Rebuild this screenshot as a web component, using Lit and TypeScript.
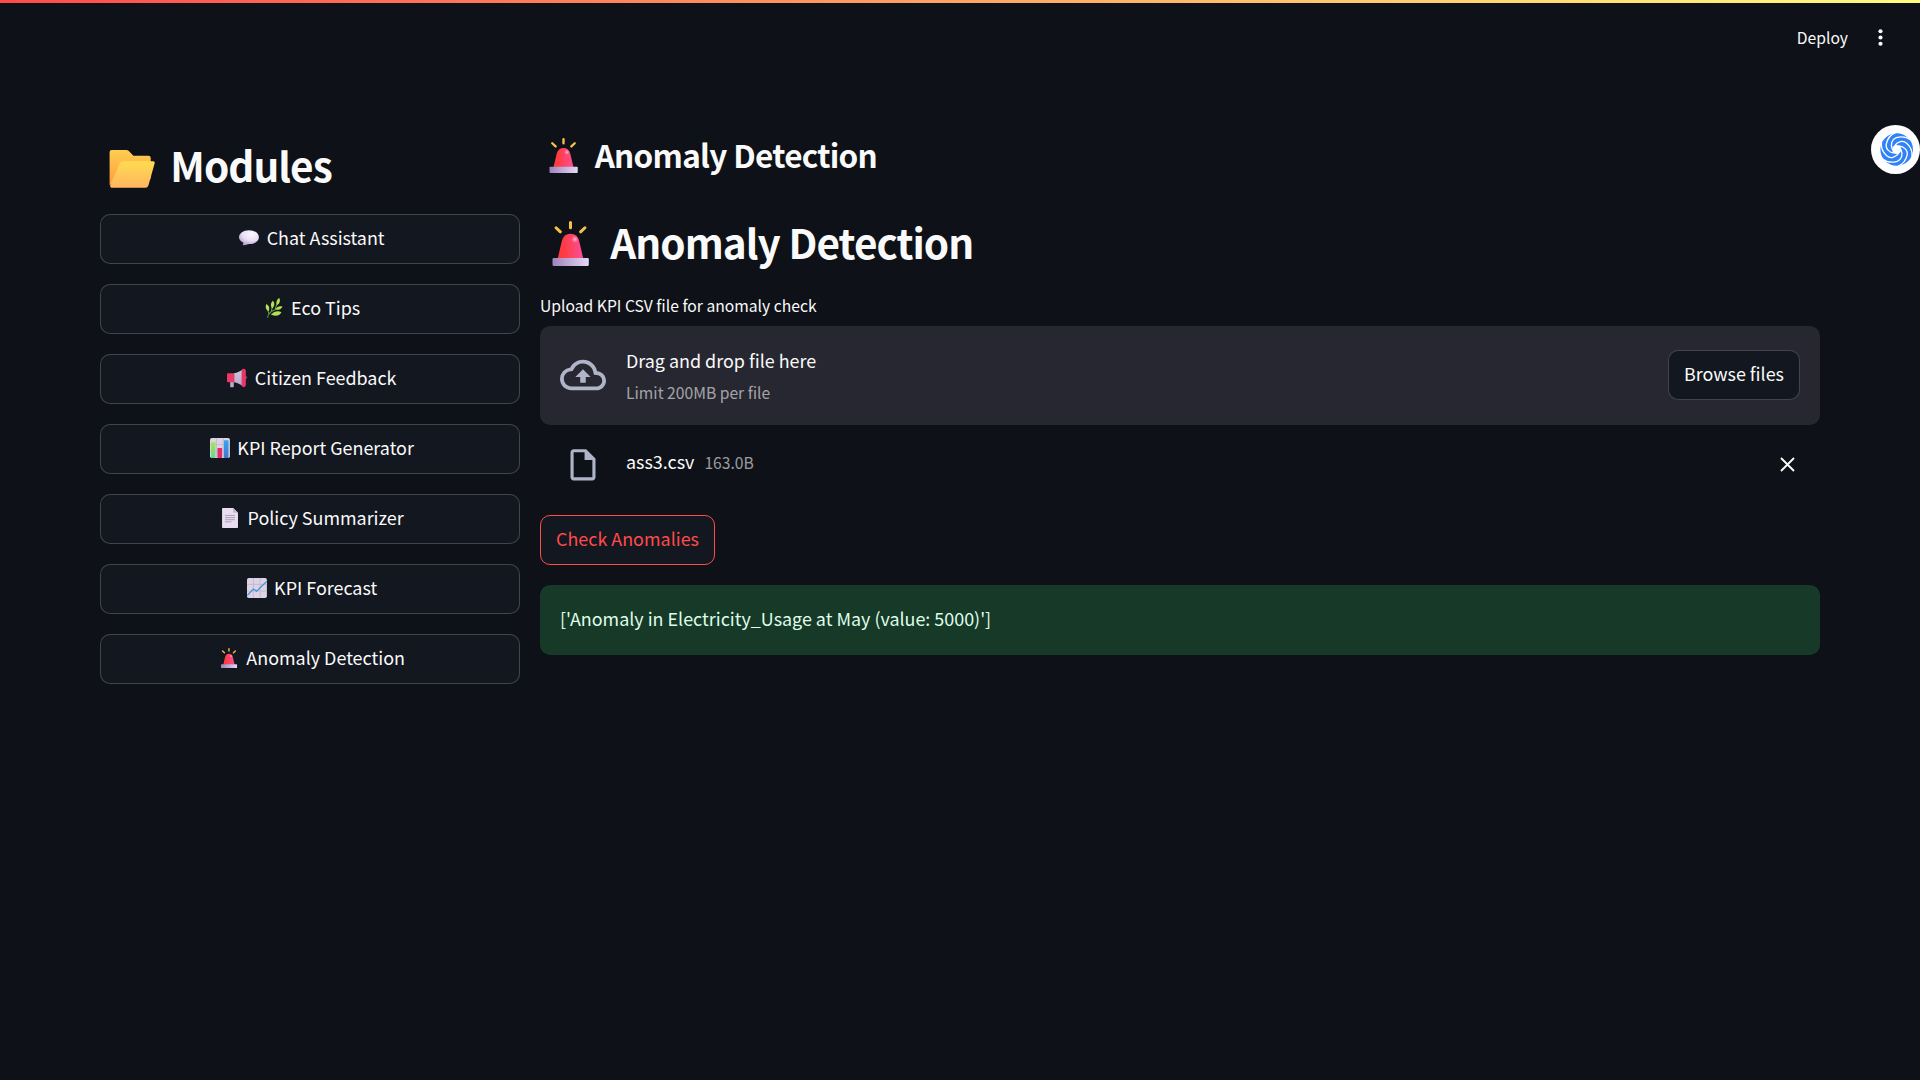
import { LitElement, html, css, svg } from "lit";
import { customElement, property } from "lit/decorators.js";

const icons: Record<string, unknown> = {
  folder: svg`
    <defs>
      <linearGradient id="fb" x1="0" y1="0" x2="0" y2="1"><stop offset="0" stop-color="#ffce52"/><stop offset="1" stop-color="#ff9b3d"/></linearGradient>
      <linearGradient id="ff" x1="0" y1="0" x2="0" y2="1"><stop offset="0" stop-color="#ffdc50"/><stop offset="1" stop-color="#ffb560"/></linearGradient>
    </defs>
    <g transform="translate(1 1.700)">
      <path fill="url(#fb)" d="M3.300 4H12.400Q13.300 4 14 4.700L16.800 7.600H26.200Q27.600 7.600 27.600 9V22H6L2 26V5.300Q2 4 3.300 4Z"/>
      <path fill="url(#ff)" d="M10.300 11H29Q30.400 11 30 12.400L26.200 26Q25.700 27.600 24.300 27.600H4Q2 27.600 2.400 25.600L8.300 12.400Q9 11 10.300 11Z"/>
    </g>`,
  siren: svg`
    <defs>
      <linearGradient id="sr" x1="0" y1="0" x2="1" y2="0"><stop offset=".2" stop-color="#ff3b40"/><stop offset=".9" stop-color="#fd4c8c"/></linearGradient>
      <linearGradient id="sb" x1="0" y1="0" x2="1" y2="0"><stop offset="0" stop-color="#9d83b9"/><stop offset="1" stop-color="#e6d9f8"/></linearGradient>
      <radialGradient id="sh"><stop offset="0" stop-color="#ffc0d4"/><stop offset="1" stop-color="#ff8fae" stop-opacity="0"/></radialGradient>
    </defs>
    <g stroke="#f5c04a" stroke-width="1.900" stroke-linecap="round"><path d="M16 3V6.200M7 6.200L9.700 8.700M25 6.200L22.300 8.700"/></g>
    <path fill="url(#sr)" d="M8 25.500L10.600 14.500Q11.800 10 16 10T21.400 14.500L24 25.500Z"/>
    <circle cx="18.700" cy="13.400" r="2.300" fill="url(#sh)"/>
    <rect x="4.800" y="25" width="22.600" height="5" rx=".7" fill="url(#sb)"/>`,
  chat: svg`
    <defs><radialGradient id="cb" cx=".62" cy=".25" r=".8"><stop offset="0" stop-color="#fbf6ff"/><stop offset=".55" stop-color="#e9dff3"/><stop offset="1" stop-color="#b09cc6"/></radialGradient></defs>
    <path fill="url(#cb)" d="M16 5C24 5 30 9.500 30 15S24 24.600 16.500 24.600C13.500 24.600 11.500 26.500 8 26.400Q6.700 26.200 7.500 24.900Q8.500 23.600 7.800 22.400C4.300 20.700 2 18.200 2 15C2 9.500 8 5 16 5Z"/>`,
  herb: svg`
    <path d="M7 29.500C8 23 13 18.500 24 17M9 24L6.500 17M12.500 20.500L14 12M17.500 18.500L21 8M12 25L19 24.500" fill="none" stroke="#6da13d" stroke-width="1.500"/>
    <g fill="#b4e052">
      <path d="M5.500 10.500C9.500 13 10.500 17 8.300 20.500C4.500 18.500 3.300 14 5.500 10.500Z"/>
      <path d="M14.700 6C17.500 9.500 17.200 13.500 13.600 16.600C10.800 13.500 11 9 14.700 6Z"/>
      <path d="M23.500 2C25.500 6 24 10 20.300 12C18.500 8.300 19.800 4 23.500 2Z"/>
      <path d="M28 14.200C26 18 21.500 19.200 18.500 17.500C20.200 14 24.500 12.500 28 14.200Z"/>
      <path d="M26.500 22.200C24 27.500 17 28.500 12.500 25.300C16 20.500 22.500 19.500 26.500 22.200Z"/>
    </g>`,
  horn: svg`
    <defs><linearGradient id="hg" x1="0" y1="0" x2="0" y2="1"><stop offset="0" stop-color="#cdcbd8"/><stop offset="1" stop-color="#b9a4cf"/></linearGradient></defs>
    <path d="M6.500 20H11.500V28Q11.500 29 10.500 29H7.500Q6.500 29 6.500 28Z" fill="#bbaacb"/>
    <circle cx="28" cy="15.500" r="2.500" fill="#85324f"/>
    <path d="M11.500 9.500C17 9 20.500 6 24 4V27.500C20.500 25 17 22.500 11.500 22Z" fill="url(#hg)"/>
    <rect x="2" y="9.500" width="10.500" height="12.700" rx="1.400" fill="#ec3a67"/>
    <rect x="22.500" y="3" width="6" height="26" rx="3" fill="#e93668"/>`,
  bars: svg`
    <defs>
      <linearGradient id="b1" x1="0" y1="0" x2="0" y2="1"><stop offset="0" stop-color="#a4e64d"/><stop offset="1" stop-color="#5bdc8c"/></linearGradient>
      <linearGradient id="b2" x1="0" y1="0" x2="0" y2="1"><stop offset="0" stop-color="#35a8f3"/><stop offset="1" stop-color="#3c78d0"/></linearGradient>
    </defs>
    <rect x="2" y="2" width="28" height="28" rx="2.500" fill="#dcd3e5"/>
    <path d="M11 2V30M20.500 2V30M2 11H30M2 20.500H30" stroke="#bdb2c6" stroke-width="1"/>
    <rect x="3.500" y="8" width="6" height="22" rx=".8" fill="url(#b1)"/>
    <rect x="12.500" y="16" width="6.500" height="14" rx=".8" fill="#e42d67"/>
    <rect x="21.500" y="5" width="6.500" height="25" rx=".8" fill="url(#b2)"/>`,
  page: svg`
    <path fill="#e8def0" d="M6 2H20.500L27.300 8.800V29Q27.300 30 26.300 30H5.900Q4.900 30 4.900 29V3Q4.900 2 6 2Z"/>
    <path fill="#c4b3d2" d="M20.500 2L27.300 8.800H21.700Q20.500 8.800 20.500 7.600Z"/>
    <path d="M9 12.500H23M9 15.500H23M9 18.500H23M9 21.500H18" stroke="#a394b2" stroke-width="1.200"/>`,
  trend: svg`
    <rect x="2" y="2" width="28" height="28" rx="2.500" fill="#dcd3e5"/>
    <path d="M11 2V30M20.500 2V30M2 11H30M2 20.500H30" stroke="#bdb2c6" stroke-width="1"/>
    <path d="M2.500 26.500L11 17.500L15.500 20.500L29.500 7" fill="none" stroke="#3b95dc" stroke-width="1.800"/>`,
};

@customElement("emoji-icon")
class EmojiIcon extends LitElement {
  @property() name = "";
  static styles = css`
    :host { display: inline-block; width: 1.5222em; text-align: center; line-height: 0; letter-spacing: 0; vertical-align: -0.167em; }
    .pic { width: 1.111em; height: 1.111em; overflow: visible; }
  `;
  render() {
    return html`<svg class="pic" viewBox="2 2 28 28">${icons[this.name]}</svg>`;
  }
}

@customElement("app-root")
class AppRoot extends LitElement {
  static styles = css`
    :host {
      display: block;
      font-family: "Noto Sans CJK JP", "Source Sans Pro", sans-serif;
      font-size: 17.920px;
      color: #fafafa;
    }
    * { box-sizing: border-box; }
    .page { position: relative; height: 1080px; background: #0e1117; overflow: hidden; }
    .strip { height: 3px; background: linear-gradient(90deg, #ff4b4b, #fffd80); }
    .top { height: 72px; display: flex; justify-content: flex-end; gap: 20px; padding: 22px 27px 0 0; }
    .deploy { font-size: 15.680px; line-height: 25px; }
    .dots { width: 25px; height: 25px; fill: #fafafa; }
    .cols { display: grid; grid-template-columns: 420px 1280px; gap: 20px; padding: 45px 100px 0; align-items: start; }
    .side { display: flex; flex-direction: column; gap: 20px; }
    h1, h2 { margin: 0; font-weight: 700; white-space: nowrap; letter-spacing: -0.0235em; word-spacing: 0.01em; }
    h1 { font-size: 40.500px; line-height: 54px; }
    h2 { font-size: 31.500px; line-height: 42px; }
    .side h1 { padding-top: 18px; height: 74px; }
    .btn {
      height: 50px; border: 1px solid rgba(250, 250, 250, 0.2); border-radius: 10px; background: #131720;
      color: inherit; font: inherit; line-height: 26px; padding: 0 15px 4px; white-space: nowrap;
    }
    .main h2 { padding-top: 13px; height: 95px; }
    .main h1 { height: 79px; }
    .label { font-size: 15.680px; line-height: 24px; height: 32px; }
    .drop { height: 99px; border-radius: 10px; background: #262730; display: flex; align-items: center; padding: 0 20px 2px; }
    .cloud { width: 46px; height: 46px; fill: #b0b4c8; margin-right: 20px; }
    .hint { flex: 1; padding-top: 4px; }
    .line { line-height: 32px; }
    .small { font-size: 15.680px; color: rgba(250, 250, 250, 0.6); }
    .line.small { line-height: 34px; }
    .file { height: 90px; display: flex; align-items: center; padding: 0 20px 11px 20px; }
    .doc { width: 46px; height: 37.500px; fill: #b0b4c8; margin-right: 20px; }
    .name { flex: 1; display: flex; align-items: baseline; gap: 10px; line-height: 30px; padding-bottom: 6px; }
    .close { width: 25px; height: 25px; }
    .check { border-color: #ff4b4b; color: #ff4b4b; width: 175px; display: block; }
    .ok { margin-top: 20px; height: 70px; border-radius: 10px; background: #173928; color: #dffde9; padding: 18px 20px; line-height: 30px; }
    .badge { position: absolute; right: 0; top: 125px; width: 49px; height: 49px; }
  `;

  private modules = [
    ["chat", "Chat Assistant"],
    ["herb", "Eco Tips"],
    ["horn", "Citizen Feedback"],
    ["bars", "KPI Report Generator"],
    ["page", "Policy Summarizer"],
    ["trend", "KPI Forecast"],
    ["siren", "Anomaly Detection"],
  ];

  render() {
    return html`
      <div class="page">
        <div class="strip"></div>
        <header class="top">
          <span class="deploy">Deploy</span>
          <svg class="dots" viewBox="0 0 24 24"><circle cx="12" cy="6" r="2"/><circle cx="12" cy="12" r="2"/><circle cx="12" cy="18" r="2"/></svg>
        </header>
        <div class="cols">
          <nav class="side">
            <h1><emoji-icon name="folder"></emoji-icon> Modules</h1>
            ${this.modules.map(([i, t]) => html`<button class="btn"><emoji-icon name=${i}></emoji-icon> ${t}</button>`)}
          </nav>
          <main class="main">
            <h2><emoji-icon name="siren"></emoji-icon> Anomaly Detection</h2>
            <h1><emoji-icon name="siren"></emoji-icon> Anomaly Detection</h1>
            <div class="label">Upload KPI CSV file for anomaly check</div>
            <section class="drop">
              <svg class="cloud" viewBox="0 0 24 24"><path d="M19.350 10.040A7.490 7.490 0 0 0 12 4C9.110 4 6.600 5.640 5.350 8.040A5.994 5.994 0 0 0 0 14c0 3.310 2.690 6 6 6h13c2.760 0 5-2.240 5-5 0-2.640-2.050-4.780-4.650-4.960zM19 18H6c-2.210 0-4-1.790-4-4 0-2.050 1.530-3.760 3.560-3.970l1.070-.11.5-.95A5.469 5.469 0 0 1 12 6c2.620 0 4.880 1.860 5.390 4.430l.3 1.500 1.530.11A2.980 2.980 0 0 1 22 15c0 1.650-1.350 3-3 3zM8 13h2.550v3h2.900v-3H16l-4-4z"/></svg>
              <div class="hint">
                <div class="line">Drag and drop file here</div>
                <div class="line small">Limit 200MB per file</div>
              </div>
              <button class="btn">Browse files</button>
            </section>
            <div class="file">
              <svg class="doc" viewBox="0 0 24 24"><path d="M6 2c-1.100 0-1.990.900-1.990 2L4 20c0 1.100.890 2 1.990 2H18c1.100 0 2-.900 2-2V8l-6-6H6zm0 18V4h7v5h5v11H6z"/></svg>
              <div class="name"><span>ass3.csv</span><span class="small">163.0B</span></div>
              <svg class="close" viewBox="0 0 25 25"><path d="M6 6L19 19M19 6L6 19" stroke="#fafafa" stroke-width="1.900"/></svg>
            </div>
            <button class="btn check">Check Anomalies</button>
            <div class="ok">['Anomaly in Electricity_Usage at May (value: 5000)']</div>
          </main>
        </div>
        <svg class="badge" viewBox="-24.500 -24.500 49 49">
          <circle r="24.500" fill="#fff"/>
          <g transform="translate(1.200 0)" fill="none" stroke="#fff">
            <circle r="16.300" fill="#2f82f8" stroke="none"/>
            <circle r="4.600" fill="#fff" stroke="none"/>
            ${[0, 60, 120, 180, 240, 300].map((a) => svg`<path transform="rotate(${a})" stroke-width="1.300" d="M-4.300 0C-6.500 -5 -5 -10.200 -0.500 -11.800C4.500 -13.400 9.500 -13 14 -9.500"/>`)}
          </g>
        </svg>
      </div>`;
  }
}
